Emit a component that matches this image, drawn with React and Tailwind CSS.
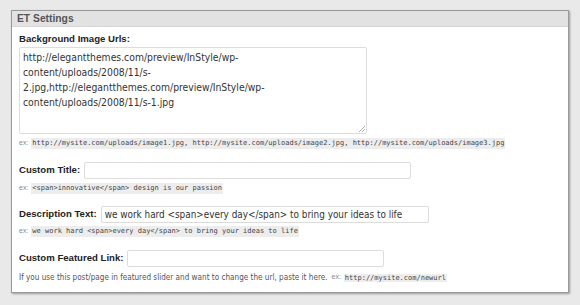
export default function App() {
  const sans = { fontFamily: '"Liberation Sans", Arial, sans-serif' };
  const tahoma = { fontFamily: '"DejaVu Sans Condensed", "DejaVu Sans", sans-serif' };
  return (
    <div className="w-[580px] h-[305px] bg-[#e9e9e9] pt-[10px] pl-[11px]" style={sans}>
      <div className="w-[558px] h-[283px] bg-white border border-[#9a9a9a] shadow-[1px_1px_2px_rgba(0,0,0,0.35)]">
        <div className="h-[16px] bg-[#e2e2e2] border-b border-[#d6d6d6] pl-[5px] text-[10.3px] font-bold text-[#555] leading-[15px]">
          ET Settings
        </div>

        <div className="pl-[7px] pt-[6px] text-[#222]">
          <div className="text-[9.6px] font-bold leading-[12px]">Background Image Urls:</div>
          <div
            className="mt-[2px] w-[348px] h-[87px] border border-[#dcdcdc] rounded-[2px] px-[3px] pt-[2px] text-[10.3px] font-stretch-condensed leading-[15px] text-[#333] relative"
            style={tahoma}
          >
            <div>http://elegantthemes.com/preview/InStyle/wp-</div>
            <div>content/uploads/2008/11/s-</div>
            <div>2.jpg,http://elegantthemes.com/preview/InStyle/wp-</div>
            <div>content/uploads/2008/11/s-1.jpg</div>
            <svg className="absolute right-[1px] bottom-[1px]" width="7" height="7" viewBox="0 0 7 7">
              <path d="M1 7 L7 1 M4 7 L7 4" stroke="#999" strokeWidth="0.8" fill="none" />
            </svg>
          </div>
          <Example>
            <Code>http://mysite.com/uploads/image1.jpg, http://mysite.com/uploads/image2.jpg, http://mysite.com/uploads/image3.jpg</Code>
          </Example>

          <div className="mt-[13px] flex items-center gap-[4px]">
            <span className="text-[9.6px] font-bold">Custom Title:</span>
            <div className="w-[327px] h-[17px] border border-[#dcdcdc] rounded-[2px]" />
          </div>
          <Example>
            <Code>&lt;span&gt;innovative&lt;/span&gt; design is our passion</Code>
          </Example>

          <div className="mt-[12px] flex items-center gap-[4px]">
            <span className="text-[9.6px] font-bold">Description Text:</span>
            <div
              className="w-[328px] h-[17px] border border-[#dcdcdc] rounded-[2px] px-[3px] text-[9.9px] font-stretch-condensed leading-[15px] text-[#333] whitespace-nowrap"
              style={tahoma}
            >
              we work hard &lt;span&gt;every day&lt;/span&gt; to bring your ideas to life
            </div>
          </div>
          <Example tight>
            <Code>we work hard &lt;span&gt;every day&lt;/span&gt; to bring your ideas to life</Code>
          </Example>

          <div className="mt-[13px] flex items-center gap-[4px]">
            <span className="text-[9.6px] font-bold">Custom Featured Link:</span>
            <div className="w-[257px] h-[17px] border border-[#dcdcdc] rounded-[2px]" />
          </div>
          <div className="mt-[2px] flex items-center text-[#555] leading-[12px] whitespace-nowrap">
            <span className="text-[8.1px] font-stretch-condensed" style={tahoma}>
              If you use this post/page in featured slider and want to change the url, paste it here.
            </span>
            <span className="ml-[4px] text-[7px] text-[#888]">ex:</span>
            <span className="ml-[3px]"><Code>http://mysite.com/newurl</Code></span>
          </div>
        </div>
      </div>
    </div>
  );
}

function Example({ children, tight }) {
  return (
    <div className={`${tight ? 'mt-[2px]' : 'mt-[3px]'} flex items-center text-[7px] text-[#888] leading-[12px]`}>
      <span className="mr-[3px]">ex:</span>
      {children}
    </div>
  );
}

function Code({ children }) {
  return (
    <code
      className="bg-[#ededed] px-[1px] text-[7px] text-[#444] leading-[11px] whitespace-nowrap"
      style={{ fontFamily: '"DejaVu Sans Mono", "Liberation Mono", monospace' }}
    >
      {children}
    </code>
  );
}
